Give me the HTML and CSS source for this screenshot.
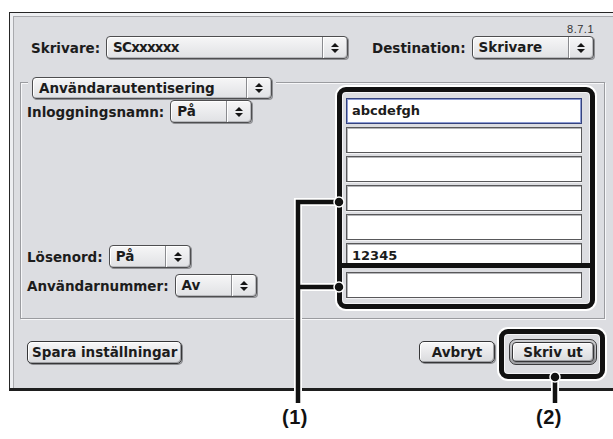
FILE: index.html
```html
<!DOCTYPE html>
<html lang="sv">
<head>
    <meta charset="UTF-8">
    <meta name="viewport" content="width=device-width, initial-scale=1.0">
    <title>Skriv ut</title>
    <link rel="stylesheet" href="styles.css">
</head>
<body>

    <div class="window">
        <div class="header">
            <div class="version">8.7.1</div>
            <div class="printer-row">
                <span class="label">Skrivare:</span>
                <div class="popup popup-printer">
                    <span class="popup-text text-narrow">SCxxxxxx</span>
                    <span class="popup-arrows"><svg width="8" height="12" viewBox="0 0 8 12"><path d="M0 5 L4 1 L8 5 Z M0 7 L4 11 L8 7 Z"/></svg></span>
                </div>
                <span class="label label-dest">Destination:</span>
                <div class="popup popup-dest">
                    <span class="popup-text">Skrivare</span>
                    <span class="popup-arrows"><svg width="8" height="12" viewBox="0 0 8 12"><path d="M0 5 L4 1 L8 5 Z M0 7 L4 11 L8 7 Z"/></svg></span>
                </div>
            </div>
        </div>

        <!-- Group box with popup as title -->
        <div class="group">
            <div class="group-side">
                <div class="group-title">
                    <div class="popup popup-title">
                        <span class="popup-text">Användarautentisering</span>
                        <span class="popup-arrows"><svg width="8" height="12" viewBox="0 0 8 12"><path d="M0 5 L4 1 L8 5 Z M0 7 L4 11 L8 7 Z"/></svg></span>
                    </div>
                </div>
                <div class="row row-first">
                    <span class="label">Inloggningsnamn:</span>
                    <div class="popup popup-small">
                        <span class="popup-text">På</span>
                        <span class="popup-arrows"><svg width="8" height="12" viewBox="0 0 8 12"><path d="M0 5 L4 1 L8 5 Z M0 7 L4 11 L8 7 Z"/></svg></span>
                    </div>
                </div>
                <div class="row row-push">
                    <span class="label">Lösenord:</span>
                    <div class="popup popup-small">
                        <span class="popup-text">På</span>
                        <span class="popup-arrows"><svg width="8" height="12" viewBox="0 0 8 12"><path d="M0 5 L4 1 L8 5 Z M0 7 L4 11 L8 7 Z"/></svg></span>
                    </div>
                </div>
                <div class="row row-last">
                    <span class="label">Användarnummer:</span>
                    <div class="popup popup-small">
                        <span class="popup-text">Av</span>
                        <span class="popup-arrows"><svg width="8" height="12" viewBox="0 0 8 12"><path d="M0 5 L4 1 L8 5 Z M0 7 L4 11 L8 7 Z"/></svg></span>
                    </div>
                </div>
            </div>

            <div class="callout callout-fields">
                <div class="fields-top">
                    <div class="field field-focus">abcdefgh</div>
                    <div class="field"></div>
                    <div class="field"></div>
                    <div class="field"></div>
                    <div class="field"></div>
                    <div class="field">12345</div>
                </div>
                <div class="callout-divider"></div>
                <div class="fields-bottom">
                    <div class="field"></div>
                </div>
            </div>
        </div>

        <div class="buttons">
            <button class="btn btn-save">Spara inställningar</button>
            <button class="btn btn-cancel">Avbryt</button>
            <div class="callout callout-print">
                <div class="default-ring">
                    <button class="btn btn-print">Skriv ut</button>
                </div>
            </div>
        </div>
    </div>

    <!-- Callout leaders and numbers -->
    <div class="annotations">
        <svg class="leaders" width="613" height="439" viewBox="0 0 613 439">
            <g class="halo">
                <path d="M338 202 H298 V403 M298 287 H338 M555 377 V403"/>
            </g>
            <g class="line">
                <path d="M338 202 H298 V403 M298 287 H338 M555 377 V403"/>
            </g>
            <circle cx="339" cy="202" r="5"/>
            <circle cx="339" cy="287" r="5"/>
            <circle cx="555" cy="377" r="5"/>
        </svg>
        <div class="note note-1">(1)</div>
        <div class="note note-2">(2)</div>
    </div>

</body>
</html>
```

FILE: styles.css
```css
/* General */
html, body {
    margin: 0;
    padding: 0;
    height: 100%;
    overflow: hidden;
}

body {
    position: relative;
    background: #fff;
    font-family: "DejaVu Sans", sans-serif;
    color: #1c1c1c;
}

/* Dialog window */
.window {
    box-sizing: border-box;
    width: 612px;
    margin: 12px 0 0 9px;
    padding: 0 0 9px 10px;
    background: #dcdde1;
    border: 1px solid #262626;
    border-bottom: 3px solid #1e1e1e;
    box-shadow: inset 3px 3px 0 #eeeff2, inset 4px 4px 0 #a9aaae;
}

.header {
    width: 585px;
    box-sizing: border-box;
    padding: 10px 11px 0 11px;
}

.version {
    font-family: "Liberation Sans", sans-serif;
    font-size: 11px;
    line-height: 13px;
    letter-spacing: 0.5px;
    text-align: right;
    color: #333;
}

.printer-row {
    display: flex;
    align-items: center;
}

.label {
    font-weight: bold;
    font-size: 13.5px;
    white-space: nowrap;
}

.label-dest {
    margin-left: 24px;
}

/* Popup menus */
.popup {
    display: flex;
    box-sizing: border-box;
    height: 23px;
    border: 1px solid #4e4e50;
    border-radius: 4px;
    background: linear-gradient(#f6f6f7, #e0e1e4);
    box-shadow: 1px 1px 0 #8f9094, inset -1px -1px 0 #b7b8bc, inset 1px 1px 0 #fff;
    font-weight: bold;
    font-size: 13.5px;
    margin-left: 6px;
}

.popup-text {
    flex: 1;
    padding-left: 6px;
    line-height: 20px;
    white-space: nowrap;
}

.text-narrow {
    letter-spacing: -0.8px;
}

.popup-arrows {
    width: 24px;
    display: flex;
    align-items: center;
    justify-content: center;
    border-left: 1px solid #8a8b8f;
    box-shadow: inset 1px 0 0 #fff;
}

.popup-arrows svg {
    fill: #151515;
}

.popup-printer {
    width: 243px;
}

.popup-dest {
    width: 123px;
}

.popup-title {
    width: 240px;
    height: 22px;
    margin-left: 0;
}

.popup-small {
    width: 82px;
}

/* Group box */
.group {
    display: flex;
    box-sizing: border-box;
    width: 585px;
    margin-top: 23px;
    padding: 4px 9px 9px 6px;
    border: 1px solid #9a9b9f;
    box-shadow: inset 1px 1px 0 #f7f7f9, 1px 1px 0 #f7f7f9;
}

.group-side {
    flex: 1;
    display: flex;
    flex-direction: column;
    padding-bottom: 12px;
}

.group-title {
    align-self: flex-start;
    margin: -10px 0 0 1px;
    padding: 0 4px;
    background: #dcdde1;
}

.row {
    display: flex;
    align-items: center;
}

.row-first {
    margin-top: 1px;
}

.row-push {
    margin-top: auto;
}

.row-last {
    margin-top: 6px;
}

/* Callout frames */
.callout {
    box-sizing: border-box;
    border: 5px solid #111;
    border-radius: 9px;
    box-shadow: 0 0 0 2px #fff, inset 0 0 0 1px #f4f4f6;
}

.callout-fields {
    width: 258px;
    flex-shrink: 0;
}

.fields-top {
    box-sizing: border-box;
    height: 171px;
    padding: 6px 8px 0 4px;
    overflow: hidden;
    display: flex;
    flex-direction: column;
    gap: 3px;
}

.callout-divider {
    height: 5px;
    background: #111;
}

.fields-bottom {
    padding: 4px 8px 6px 4px;
}

.field {
    box-sizing: border-box;
    flex-shrink: 0;
    height: 26px;
    padding-left: 5px;
    background: #fff;
    border: 1px solid #58585a;
    box-shadow: inset 1px 1px 0 #b4b5b8, 0 1px 0 #f2f2f4;
    font-weight: bold;
    font-size: 13px;
    line-height: 24px;
}

.field-focus {
    border-color: #34427e;
    box-shadow: inset 0 0 0 1px #8c9bd3;
}

/* Buttons */
.buttons {
    display: flex;
    align-items: center;
    width: 585px;
    box-sizing: border-box;
    margin-top: 10px;
    padding-left: 7px;
}

.btn {
    box-sizing: border-box;
    height: 23px;
    padding: 0 4px;
    border: 1px solid #363638;
    border-radius: 5px;
    background: linear-gradient(#f7f7f8, #d9dadd);
    box-shadow: inset -1px -1px 0 #9fa0a4, inset 1px 1px 0 #fff, 1px 1px 0 #8c8d91;
    font-family: "DejaVu Sans", sans-serif;
    font-weight: bold;
    font-size: 13.5px;
    color: #1c1c1c;
    margin-bottom: 4px;
}

.btn-cancel {
    width: 76px;
    height: 22px;
    margin-left: auto;
    margin-right: 4px;
    padding: 0;
}

.callout-print {
    padding: 5px 3px 9px 5px;
}

.default-ring {
    padding: 2px;
    border: 1px solid #3a3a3c;
    border-radius: 7px;
    background: linear-gradient(#cfd0d3, #a3a4a8);
}

.btn-print {
    display: block;
    width: 82px;
    height: 20px;
    padding: 0;
    margin: 0;
    border-radius: 4px;
}

/* Annotation layer */
.annotations {
    position: absolute;
    left: 0;
    top: 0;
    width: 613px;
    height: 439px;
    pointer-events: none;
}

.leaders {
    position: absolute;
    left: 0;
    top: 0;
}

.leaders path {
    fill: none;
}

.halo path {
    stroke: #fff;
    stroke-width: 8;
}

.line path {
    stroke: #111;
    stroke-width: 4.5;
}

.leaders circle {
    fill: #111;
    stroke: #fff;
    stroke-width: 1.5;
}

.note {
    position: absolute;
    top: 406px;
    font-family: "Liberation Sans", sans-serif;
    font-weight: bold;
    font-size: 20px;
    letter-spacing: 0.5px;
    color: #111;
}

.note-1 {
    left: 282px;
}

.note-2 {
    left: 536px;
}
```
